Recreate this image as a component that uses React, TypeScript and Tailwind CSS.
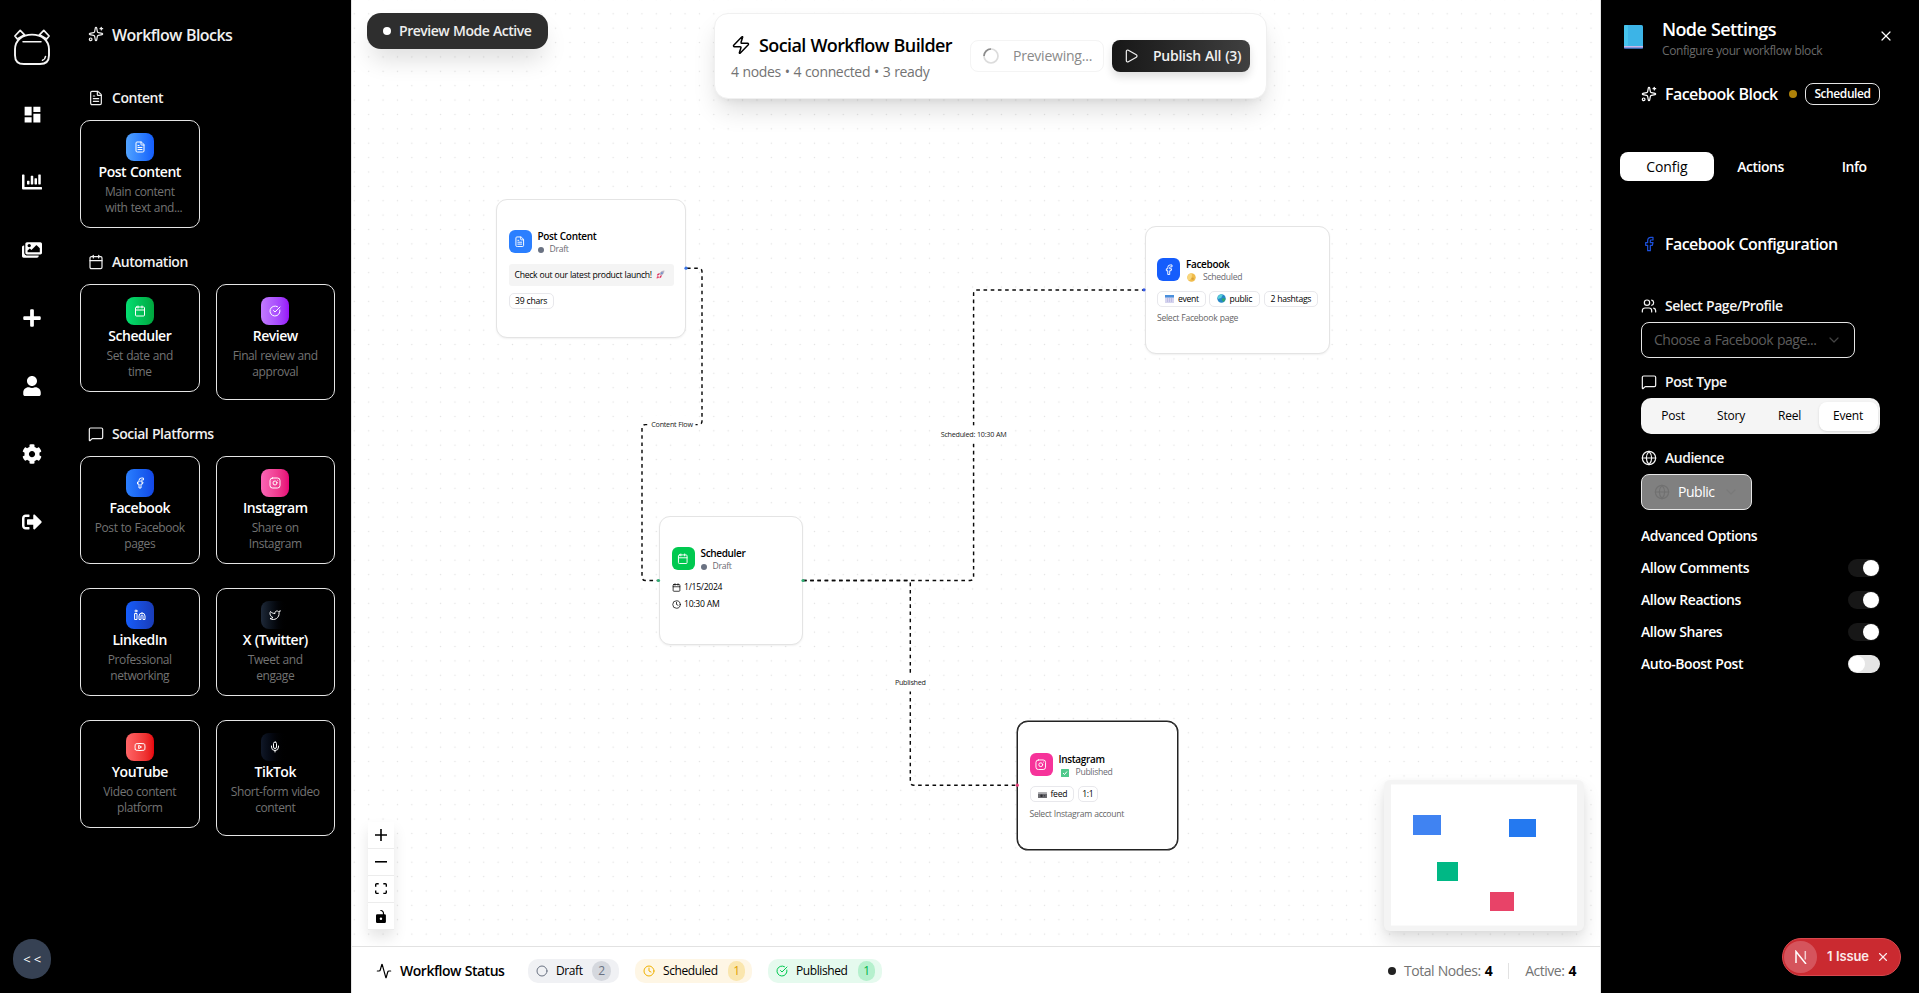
import React from "react";
import {
  Activity,
  Calendar,
  ChevronDown,
  Circle,
  CircleCheckBig,
  Clock,
  Facebook,
  FileText,
  Globe,
  Instagram,
  Linkedin,
  MessageSquare,
  Mic,
  Play,
  Sparkles,
  Twitter,
  Users,
  X,
  Youtube,
  Zap,
} from "lucide-react";
import { FaChartBar, FaCog, FaImages, FaPlus, FaSignOutAlt, FaUser } from "react-icons/fa";
import { MdDashboard } from "react-icons/md";

type IconType = React.ComponentType<{ className?: string; strokeWidth?: number }>;

/* ---------- Left rail ---------- */

function Logo() {
  return (
    <svg viewBox="0 0 38 38" className="h-[38px] w-[38px]" fill="none" stroke="#f5f5f5" strokeWidth="1.9" strokeLinejoin="round" strokeLinecap="round">
      <path d="M4.300 11 1.900 8 7.200 2.400 11.600 6.800 4.300 11" strokeWidth="1.700" />
      <path d="M33.700 11 36.100 8 30.800 2.400 26.400 6.800 33.700 11" strokeWidth="1.700" />
      <path d="M19 6.600c9.500 0 17 5.500 17 15v5.600c0 6-3 8.800-9 8.800H11c-6 0-9-2.800-9-8.800v-5.600c0-9.500 7.500-15 17-15Z" />
      <path d="M10 13.800h18" strokeWidth="1.500" />
      <path d="M32.500 28.500c-.3 2-1.200 3.200-3 3.800" strokeWidth="1.600" />
    </svg>
  );
}

function Rail() {
  const items: { icon: IconType; cls: string }[] = [
    { icon: MdDashboard, cls: "h-[21px] w-[21px]" },
    { icon: FaChartBar, cls: "h-5 w-5" },
    { icon: FaImages, cls: "h-5 w-5" },
    { icon: FaPlus, cls: "h-5 w-5" },
    { icon: FaUser, cls: "h-5 w-5" },
    { icon: FaCog, cls: "h-5 w-5" },
    { icon: FaSignOutAlt, cls: "h-5 w-5" },
  ];
  return (
    <nav className="flex w-16 shrink-0 flex-col items-center pt-[28px] pb-[14px] text-white">
      <Logo />
      <div className="mt-[38px] flex flex-col items-center gap-12">
        {items.map(({ icon: Icon, cls }, i) => (
          <span key={i} className="flex h-5 w-5 items-center justify-center">
            <Icon className={`${cls} shrink-0`} />
          </span>
        ))}
      </div>
      <button className="mt-auto flex h-10 w-[38px] items-center justify-center rounded-full bg-[#364153] pt-0.5 text-[13px] text-white">
        &lt; &lt;
      </button>
    </nav>
  );
}

/* ---------- Block palette ---------- */

interface Block {
  icon: IconType;
  title: string;
  lines: [string, string];
  tile: string;
  tall?: boolean;
  shift?: boolean;
}

const content: Block[] = [
  { icon: FileText, title: "Post Content", lines: ["Main content", "with text and..."], tile: "from-[#51a2ff] to-[#155dfc]", shift: true },
];
const automation: Block[] = [
  { icon: Calendar, title: "Scheduler", lines: ["Set date and", "time"], tile: "from-[#05df72] to-[#00a63e]" },
  { icon: CircleCheckBig, title: "Review", lines: ["Final review and", "approval"], tile: "from-[#c27aff] to-[#9810fa]", tall: true },
];
const social: Block[] = [
  { icon: Facebook, title: "Facebook", lines: ["Post to Facebook", "pages"], tile: "from-[#2b7fff] to-[#1447e6]" },
  { icon: Instagram, title: "Instagram", lines: ["Share on", "Instagram"], tile: "from-[#fb64b6] to-[#e60076]" },
  { icon: Linkedin, title: "LinkedIn", lines: ["Professional", "networking"], tile: "from-[#155dfc] to-[#193cb8]" },
  { icon: Twitter, title: "X (Twitter)", lines: ["Tweet and", "engage"], tile: "from-[#1e2939] to-black" },
  { icon: Youtube, title: "YouTube", lines: ["Video content", "platform"], tile: "from-[#ff6467] to-[#e7000b]" },
  { icon: Mic, title: "TikTok", lines: ["Short-form video", "content"], tile: "from-[#101828] to-black", tall: true },
];

function BlockCard({ icon: Icon, title, lines, tile, tall, shift }: Block) {
  return (
    <div className={`flex flex-col items-center rounded-[10px] border border-[#e5e5e5] pt-3 ${tall ? "h-[116px]" : "h-[108px]"}`}>
      <span className={`flex h-7 w-7 items-center justify-center rounded-lg bg-linear-to-r ${tile}`}>
        <Icon className="h-3 w-3 text-white" />
      </span>
      <h3 className="text-sm leading-[21px] font-[650] text-white">{title}</h3>
      <p className="mt-[2px] flex flex-col items-center text-xs leading-4 text-[#737373]">
        <span>{lines[0]}</span>
        <span className={shift ? "pl-2" : ""}>{lines[1]}</span>
      </p>
    </div>
  );
}

function Section({ icon: Icon, title, blocks, className }: { icon: IconType; title: string; blocks: Block[]; className: string }) {
  return (
    <section className={className}>
      <h2 className="flex h-4 items-center gap-2 pl-2 text-sm font-[650] text-[#f0f0f0]">
        <Icon className="h-4 w-4" strokeWidth={1.8} />
        {title}
      </h2>
      <div className="mt-[14px] grid grid-cols-2 items-start gap-x-4 gap-y-6">
        {blocks.map((b) => (
          <BlockCard key={b.title} {...b} />
        ))}
      </div>
    </section>
  );
}

function Palette() {
  return (
    <aside className="w-72 shrink-0 border-r border-[#e5e5e5] px-4 pt-[26px]">
      <h1 className="flex h-4 items-center gap-2 pl-2 text-base font-[650] text-[#f0f0f0]">
        <Sparkles className="h-4 w-4" strokeWidth={1.8} />
        <span className="pt-px">Workflow Blocks</span>
      </h1>
      <Section icon={FileText} title="Content" blocks={content} className="mt-12" />
      <Section icon={Calendar} title="Automation" blocks={automation} className="mt-[26px]" />
      <Section icon={MessageSquare} title="Social Platforms" blocks={social} className="mt-[26px]" />
    </aside>
  );
}

/* ---------- Canvas ---------- */

function Rocket() {
  return (
    <svg viewBox="0 0 16 16" className="h-[9px] w-[9px]">
      <path d="M15 1c-4 0-7 2-9.500 6l3.500 3.500C13 8 15 5 15 1Z" fill="#b9b3c4" />
      <path d="M6.500 5.500 2.500 7l-1 3 4-1zM10.500 9.500 9 13.500l-3 1 1-4z" fill="#e0305e" />
      <circle cx="10.500" cy="5.500" r="1.600" fill="#5d8ad0" />
      <path d="M1 15c0-3 1-4.500 2.500-4.500l2 2C5.500 14 4 15 1 15Z" fill="#e84a6f" />
    </svg>
  );
}

function Moon() {
  return (
    <svg viewBox="0 0 16 16" className="h-[9px] w-[9px]">
      <circle cx="8" cy="8" r="7.500" fill="#f0bc4c" />
      <path d="M8 .5a7.500 7.500 0 0 0-5 13A11 11 0 0 0 8 .5Z" fill="#f8d67c" />
      <circle cx="10" cy="10" r="2.200" fill="#d9a036" />
    </svg>
  );
}

function CalendarEmoji() {
  return (
    <svg viewBox="0 0 18 16" className="h-2 w-[9px]">
      <rect width="18" height="16" rx="1" fill="#d5d4ee" />
      <rect width="18" height="5" fill="#4a8fdc" />
      <path d="M4 7h2v2H4zM8 7h2v2H8zM12 7h2v2h-2zM4 11h2v2H4zM8 11h2v2H8zM12 11h2v2h-2z" fill="#a9a4dc" />
    </svg>
  );
}

function GlobeEmoji() {
  return (
    <svg viewBox="0 0 16 16" className="h-[9px] w-[9px]">
      <circle cx="8" cy="8" r="7.500" fill="#2687c8" />
      <path d="M3 3c3-3 7-2.500 7-1s-2 2-2 4-4 1-5 3c-1 1-2-2-1.500-3.500Z" fill="#58d0d8" />
      <path d="M9 8c3-1 6-1 6 1 0 3-3 5-4 5s-1-2-2-3-1-2.500 0-3Z" fill="#2fa56f" />
    </svg>
  );
}

function CheckEmoji() {
  return (
    <svg viewBox="0 0 16 16" className="h-2 w-2">
      <rect width="16" height="16" rx="1" fill="#4fc98b" />
      <path d="m4 8 3 3 5-6" fill="none" stroke="#fff" strokeWidth="2" />
    </svg>
  );
}

function CameraEmoji() {
  return (
    <svg viewBox="0 0 18 12" className="mt-0.5 h-[6px] w-[9px]">
      <rect y="1" width="18" height="11" rx="1" fill="#6b6b70" />
      <rect y="1" width="18" height="3" fill="#a9a9ad" />
      <circle cx="7" cy="7.500" r="2.500" fill="#2e2e33" />
      <circle cx="13" cy="7.500" r="1.500" fill="#3c3c42" />
    </svg>
  );
}

function NodeShell({ className, children }: { className: string; children: React.ReactNode }) {
  return (
    <div className={`absolute rounded-[11px] border bg-white px-[11.500px] text-[8.640px] leading-[12px] text-black ${className}`}>
      {children}
    </div>
  );
}

function NodeHead({ icon: Icon, tile, title, mark, status }: { icon: IconType; tile: string; title: string; mark: React.ReactNode; status: string }) {
  return (
    <div className="flex h-[26px] gap-x-[6px]">
      <span className={`flex h-[23px] w-[23px] shrink-0 items-center justify-center rounded-[6px] ${tile}`}>
        <Icon className="h-[11.500px] w-[11.500px] text-white" />
      </span>
      <div className="flex flex-col">
        <span className="text-[10px] leading-[13px] font-semibold">{title}</span>
        <span className="flex items-center leading-[13px] text-[#6a6a72]">
          {mark}
          {status}
        </span>
      </div>
    </div>
  );
}

function Chip({ className, children }: { className: string; children: React.ReactNode }) {
  return (
    <span className={`flex h-4 shrink-0 items-center rounded-[5px] border border-[#e8e8ec] font-medium whitespace-nowrap ${className}`}>
      {children}
    </span>
  );
}

const grayDot = <span className="mr-[6px] h-[6px] w-[6px] rounded-full bg-[#6a7282]" />;

function EdgeLabel({ x, y, text, width }: { x: number; y: number; text: string; width: number }) {
  return (
    <g>
      <rect x={x - width / 2 - 3} y={y - 9} width={width + 6} height={18} fill="#fff" />
      <text x={x} y={y + 2.4} textAnchor="middle" fontSize="7.2" fill="#222">
        {text}
      </text>
    </g>
  );
}

function Edges() {
  return (
    <svg viewBox="352 0 1248 946" className="absolute inset-0 h-full w-full">
      <defs>
        <pattern id="dots" x="361.5" y="6.6" width="14.38" height="14.38" patternUnits="userSpaceOnUse">
          <circle cx="7.190" cy="7.190" r="0.72" fill="#e2e2e2" />
        </pattern>
      </defs>
      <rect x="352" y="0" width="1248" height="946" fill="url(#dots)" />
      <g fill="none" stroke="#0a0a0a" strokeWidth="1.440" strokeDasharray="3.600 3.600">
        <path d="M687 268.200H698.500Q702 268.200 702 271.800V421Q702 424.600 698.500 424.600H645.500Q642 424.600 642 428.200V576.900Q642 580.500 645.500 580.500H658" />
        <path d="M803 580.500H970Q973.600 580.500 973.600 576.900V293.600Q973.600 290 977.200 290H1144" />
        <path d="M803 580.500H906.700Q910.300 580.500 910.300 584.100V781.600Q910.300 785.200 913.900 785.200H1017" />
      </g>
      <EdgeLabel x={672} y={424.6} width={41} text="Content Flow" />
      <EdgeLabel x={973.6} y={434.6} width={66} text="Scheduled: 10:30 AM" />
      <EdgeLabel x={910.3} y={682.5} width={31} text="Published" />
    </svg>
  );
}

function Handles() {
  return (
    <svg viewBox="352 0 1248 946" className="pointer-events-none absolute inset-0 h-full w-full">
      <circle cx="686" cy="268.200" r="1.600" fill="#3b76e8" />
      <circle cx="658.500" cy="580.500" r="1.600" fill="#2fae74" />
      <circle cx="803" cy="580.500" r="1.600" fill="#2fae74" />
      <circle cx="1144" cy="289.800" r="1.600" fill="#3458e8" />
      <circle cx="1017.300" cy="785.200" r="1.600" fill="#e8407a" />
    </svg>
  );
}

function Controls() {
  const cls = "flex h-[27px] w-[26px] items-center justify-center border-b border-[#ececec] bg-white";
  return (
    <div className="absolute top-[822px] left-4 flex flex-col shadow-[0_8px_14px_rgba(0,0,0,0.10)]">
      <span className={cls}>
        <svg viewBox="0 0 32 32" className="h-3 w-3">
          <path d="M32 18.133H18.133V32h-4.266V18.133H0v-4.266h13.867V0h4.266v13.867H32z" />
        </svg>
      </span>
      <span className={cls}>
        <svg viewBox="0 0 32 5" className="w-3">
          <path d="M0 0h32v4.200H0z" />
        </svg>
      </span>
      <span className={cls}>
        <svg viewBox="0 0 32 30" className="w-3">
          <path d="M3.692 4.630c0-.53.4-.938.939-.938h5.215V0H4.708C2.130 0 0 2.054 0 4.630v5.216h3.692V4.631zM27.354 0h-5.200v3.692h5.170c.53 0 .984.4.984.939v5.215H32V4.631A4.624 4.624 0 0027.354 0zm.954 24.830c0 .532-.4.940-.939.940h-5.215v3.768h5.215c2.577 0 4.631-2.130 4.631-4.707v-5.139h-3.692v5.139zm-23.677.940c-.531 0-.939-.4-.939-.940v-5.138H0v5.139c0 2.577 2.130 4.707 4.708 4.707h5.138V25.770H4.631z" />
        </svg>
      </span>
      <span className={cls}>
        <svg viewBox="0 0 25 32" className="h-[13px]">
          <path d="M21.333 10.667H19.810V7.619C19.810 3.429 16.380 0 12.190 0c-4.114 1.828-1.370 2.133.305 2.438 1.676.305 4.420 2.590 4.420 5.181v3.048H3.047A3.056 3.056 0 000 13.714v15.238A3.056 3.056 0 003.048 32h18.285a3.056 3.056 0 003.048-3.048V13.714a3.056 3.056 0 00-3.048-3.047zM12.190 24.533a3.056 3.056 0 01-3.047-3.047 3.056 3.056 0 013.047-3.048 3.056 3.056 0 013.048 3.048 3.056 3.056 0 01-3.048 3.047z" />
        </svg>
      </span>
    </div>
  );
}

function MiniMap() {
  return (
    <div className="absolute top-[780px] left-[1032px] h-[151px] w-[200px] rounded-md bg-[#f4f4f4] shadow-[0_10px_18px_rgba(0,0,0,0.12),0_2px_6px_rgba(0,0,0,0.04)]">
      <svg viewBox="0 0 200 151" className="h-full w-full">
        <rect x="7" y="4.500" width="186" height="141" fill="#fff" />
        <rect x="29" y="35" width="28" height="20" fill="#4083f2" />
        <rect x="125" y="39" width="27" height="18" fill="#2479f0" />
        <rect x="53" y="82" width="21" height="19" fill="#00b885" />
        <rect x="106" y="112" width="24" height="19" fill="#e84368" />
      </svg>
    </div>
  );
}

function HeaderCard() {
  return (
    <header className="absolute top-[13px] left-[362px] flex h-[86px] w-[553px] items-center rounded-[14px] border border-[#f0f0f0] bg-white pl-[16px] shadow-[0_14px_26px_-4px_rgba(0,0,0,0.14),0_4px_10px_-4px_rgba(0,0,0,0.08)]">
      <div className="flex w-[224px] flex-col">
        <h1 className="flex h-7 items-center gap-2 text-lg font-[570] text-black">
          <Zap className="h-5 w-5" strokeWidth={1.8} />
          Social Workflow Builder
        </h1>
        <p className="mt-[3px] text-sm leading-5 tracking-[-0.025em]! text-[#737373]">4 nodes • 4 connected • 3 ready</p>
      </div>
      <div className="ml-[15px] flex items-center gap-2">
        <button className="flex h-8 w-[134px] items-center rounded-lg border border-[#f4f4f4] pl-3 text-sm font-medium tracking-[-0.016em]! text-[#8a8a8a]">
          <svg viewBox="0 0 16 16" className="mr-[14px] h-4 w-4" fill="none" strokeWidth="1.700">
            <circle cx="8" cy="8" r="7" stroke="#dcdcdc" />
            <path d="M1 8a7 7 0 0 1 7-7" stroke="#8c8c8c" />
          </svg>
          Previewing...
        </button>
        <button className="flex h-8 w-[138px] items-center rounded-lg bg-linear-to-r from-[#171717] to-[#404040] pl-[11px] text-sm font-semibold tracking-[-0.018em]! text-[#f0f0f0] shadow-[0_5px_9px_rgba(0,0,0,0.13)]">
          <Play className="mr-[14px] h-4 w-4" strokeWidth={1.8} />
          Publish All (3)
        </button>
      </div>
    </header>
  );
}

function Canvas() {
  return (
    <div className="relative h-[946px] overflow-hidden bg-white">
      <Edges />
      <NodeShell className="top-[199px] left-[144px] h-[139px] w-[190px] border-[#e4e4e4] pt-[30px] shadow-[0_1px_2px_rgba(0,0,0,0.06)]">
        <NodeHead icon={FileText} tile="bg-[#2b7fff]" title="Post Content" mark={grayDot} status="Draft" />
        <div className="mt-[7.500px] flex h-[22.500px] w-[165px] items-center gap-[4px] rounded-[3px] bg-[#f4f4f4] pl-[6px] whitespace-nowrap">
          Check out our latest product launch!
          <Rocket />
        </div>
        <div className="mt-[6.500px] flex">
          <Chip className="w-[45px] justify-center">39 chars</Chip>
        </div>
      </NodeShell>
      <NodeShell className="top-[516px] left-[307px] h-[129px] w-[144px] border-[#e4e4e4] pt-[30px] shadow-[0_1px_2px_rgba(0,0,0,0.06)]">
        <NodeHead icon={Calendar} tile="bg-[#00c950]" title="Scheduler" mark={grayDot} status="Draft" />
        <div className="mt-[8px] flex items-center gap-[3.500px]">
          <Calendar className="h-[9px] w-[9px]" />
          1/15/2024
        </div>
        <div className="mt-[5px] flex items-center gap-[3.500px]">
          <Clock className="h-[9px] w-[9px]" />
          10:30 AM
        </div>
      </NodeShell>
      <NodeShell className="top-[226px] left-[792.500px] h-[128px] w-[185px] border-[#e4e4e4] pt-[31px] shadow-[0_1px_2px_rgba(0,0,0,0.06)]">
        <NodeHead icon={Facebook} tile="bg-[#155dfc]" title="Facebook" mark={<span className="mr-[7px] ml-px"><Moon /></span>} status="Scheduled" />
        <div className="mt-[6.500px] flex gap-[3.500px]">
          <Chip className="w-[48.500px] gap-[4px] pl-[7px]">
            <CalendarEmoji />
            event
          </Chip>
          <Chip className="w-[51px] gap-[4px] pl-[6.500px]">
            <GlobeEmoji />
            public
          </Chip>
          <Chip className="w-[54.500px] justify-center">2 hashtags</Chip>
        </div>
        <div className="mt-[5.500px] text-[#666]">Select Facebook page</div>
      </NodeShell>
      <NodeShell className="top-[721px] left-[665px] h-[129px] w-[161px] border-[#222] pt-[31px] shadow-[0_0_0_0.500px_#222]">
        <NodeHead icon={Instagram} tile="bg-[#f6339a]" title="Instagram" mark={<span className="mr-[7px] ml-[2px]"><CheckEmoji /></span>} status="Published" />
        <div className="mt-[7px] flex gap-[3.500px]">
          <Chip className="w-[44.500px] gap-[4px] pl-[7px]">
            <CameraEmoji />
            feed
          </Chip>
          <Chip className="w-[20.500px] justify-center">1:1</Chip>
        </div>
        <div className="mt-[6px] text-[#666]">Select Instagram account</div>
      </NodeShell>
      <Handles />
      <div className="absolute top-[13px] left-[15px] flex h-9 w-[181px] items-center gap-2 rounded-[14px] bg-[#2e2e2e] pl-4 text-sm font-[650] text-[#eee] shadow-[0_14px_24px_-4px_rgba(0,0,0,0.14)]">
        <span className="h-2 w-2 rounded-full bg-white" />
        Preview Mode Active
      </div>
      <HeaderCard />
      <Controls />
      <MiniMap />
    </div>
  );
}

function StatusBar() {
  return (
    <footer className="flex h-[47px] items-center border-t border-[#e2e2e2] bg-white pt-[2px] pr-6 pl-6 text-sm text-black">
      <Activity className="h-4 w-4" strokeWidth={1.8} />
      <span className="ml-2 w-[128px] font-semibold">Workflow Status</span>
      <div className="flex items-center gap-4 text-xs font-medium">
        <span className="flex h-6 w-[91px] items-center rounded-[10px] bg-[#f0f1f4] pl-2">
          <Circle className="mr-2 h-3 w-3 text-[#6a7282]" />
          Draft
          <span className="mr-2 ml-auto flex h-5 w-[19px] items-center justify-center rounded-full bg-[#d5d8de] text-[#6a7282]">2</span>
        </span>
        <span className="flex h-6 w-[117px] items-center rounded-[10px] bg-[#fef6e5] pl-2">
          <Clock className="mr-2 h-3 w-3 text-[#f0b100]" />
          Scheduled
          <span className="mr-[7px] ml-auto flex h-5 w-[17px] items-center justify-center rounded-full bg-[#fae6ae] text-[#dfa000]">1</span>
        </span>
        <span className="flex h-6 w-[114px] items-center rounded-[10px] bg-[#e5faee] pl-2">
          <CircleCheckBig className="mr-2 h-3 w-3 text-[#00c950]" />
          Published
          <span className="mr-[7px] ml-auto flex h-5 w-[17px] items-center justify-center rounded-full bg-[#b5f0cd] text-[#00b548]">1</span>
        </span>
      </div>
      <div className="ml-auto flex items-center">
        <span className="mr-2 h-2 w-2 rounded-full bg-[#222]" />
        <span className="text-[#737373]">Total Nodes:</span>
        <span className="ml-1 font-bold">4</span>
        <span className="mx-4 h-4 w-px bg-[#e2e2e2]" />
        <span className="text-[#737373]">Active:</span>
        <span className="ml-1 font-bold">4</span>
      </div>
    </footer>
  );
}

/* ---------- Settings panel ---------- */

function Label({ icon: Icon, text, className }: { icon: IconType; text: string; className: string }) {
  return (
    <div className={`flex h-4 items-center gap-2 text-sm font-[650] text-[#f5f5f5] ${className}`}>
      <Icon className="h-4 w-4" strokeWidth={1.8} />
      {text}
    </div>
  );
}

function Toggle({ label, on }: { label: string; on: boolean }) {
  return (
    <div className="flex h-[18px] items-center justify-between text-sm font-[650] text-white">
      {label}
      <span className={`flex h-[18px] w-8 items-center rounded-full px-px ${on ? "justify-end bg-[#171717]" : "bg-[#e5e5e5]"}`}>
        <span className="h-4 w-4 rounded-full bg-white" />
      </span>
    </div>
  );
}

function Settings() {
  const types = ["Post", "Story", "Reel", "Event"];
  const widths = ["w-[57px]", "w-[59px]", "w-[58px]", "w-[59px]"];
  return (
    <aside className="relative w-[319px] shrink-0 border-l border-[#e5e5e5] text-white">
      <div className="flex h-[72px] pt-[18px] pl-[23px]">
        <svg viewBox="0 0 19 24" className="mt-[7px] h-6 w-[19px]">
          <rect width="19" height="23.500" rx="1.500" fill="#3cb4e7" />
          <rect width="4" height="21" rx="1" fill="#46c4ee" />
          <rect y="21" width="19" height="2" fill="#c9b8e8" />
          <rect y="22.500" width="19" height="1" fill="#4a6fd0" />
        </svg>
        <div className="ml-[19px] w-[216px]">
          <h2 className="text-lg leading-[22px] font-semibold">Node Settings</h2>
          <p className="mt-[3px] text-xs leading-4 text-[#6a6a6a]">Configure your workflow block</p>
        </div>
        <X className="mt-[10px] h-4 w-4" strokeWidth={1.8} />
      </div>
      <div className="mt-[11px] flex h-[22px] items-center pl-10">
        <Sparkles className="h-4 w-4" strokeWidth={1.8} />
        <h3 className="ml-2 w-[124px] text-base font-semibold whitespace-nowrap">Facebook Block</h3>
        <span className="h-2 w-2 rounded-full bg-[#af8209]" />
        <span className="ml-2 flex h-[22px] w-[75px] items-center justify-center rounded-lg border border-[#e5e5e5] text-xs font-semibold">
          Scheduled
        </span>
      </div>
      <div className="mt-[47px] ml-[19px] grid w-[281px] grid-cols-3 text-sm font-semibold">
        <span className="flex h-[29px] items-center justify-center rounded-lg bg-white font-medium tracking-[-0.005em]! text-black">Config</span>
        <span className="flex h-[29px] items-center justify-center">Actions</span>
        <span className="flex h-[29px] items-center justify-center">Info</span>
      </div>
      <div className="pt-[54px] pr-[39px] pl-10">
        <h3 className="flex h-[18px] items-center gap-2 text-base font-semibold">
          <Facebook className="h-4 w-4 text-[#1c50dc]" strokeWidth={1.8} />
          Facebook Configuration
        </h3>
        <Label icon={Users} text="Select Page/Profile" className="mt-[45px]" />
        <div className="mt-2 flex h-9 w-[214px] items-center rounded-lg border border-[#e5e5e5] pr-3 pl-3 text-sm text-[#5c5c5c]">
          Choose a Facebook page...
          <ChevronDown className="ml-auto h-4 w-4 text-[#444]" strokeWidth={1.8} />
        </div>
        <Label icon={MessageSquare} text="Post Type" className="mt-4" />
        <div className="mt-2 flex h-9 w-[239px] items-center rounded-[10px] bg-[#f5f5f5] pl-[3.500px] text-xs font-medium text-black">
          {types.map((t, i) => (
            <span key={t} className={`flex h-[29px] items-center justify-center rounded-lg tracking-[-0.018em]! ${widths[i]} ${t === "Event" ? "bg-white shadow-sm" : ""}`}>
              {t}
            </span>
          ))}
        </div>
        <Label icon={Globe} text="Audience" className="mt-4" />
        <div className="mt-2 flex h-9 w-[111px] items-center rounded-lg border border-[#e5e5e5] bg-[#808080] pr-3 pl-3 text-sm">
          <Globe className="mr-2 h-4 w-4 text-[#717171]" strokeWidth={1.8} />
          Public
          <ChevronDown className="ml-auto h-4 w-4 text-[#797979]" />
        </div>
        <div className="mt-[17px] flex h-[18px] items-center text-sm font-[650]">Advanced Options</div>
        <div className="mt-[14px] flex flex-col gap-[14px]">
          <Toggle label="Allow Comments" on />
          <Toggle label="Allow Reactions" on />
          <Toggle label="Allow Shares" on />
          <Toggle label="Auto-Boost Post" on={false} />
        </div>
      </div>
      <div className="absolute top-[938px] left-[181px] flex h-[38px] w-[119px] items-center rounded-full border border-[#d8484e] bg-[#ca2a30] font-['Inter',sans-serif]">
        <span className="ml-px flex h-8 w-[33px] items-center justify-center rounded-full bg-[#d5545c]">
          <svg viewBox="0 0 14 14" className="h-[14px] w-[14px]" fill="none" stroke="#fff" strokeWidth="1.500">
            <path d="M2 13V1.500L12 14" />
            <path d="M11.300 1v8.500" strokeOpacity="0.7" />
          </svg>
        </span>
        <span className="ml-[10px] w-[42px] text-[13px] font-semibold tracking-[-0.010em]! whitespace-nowrap text-[#fbe9ea]">1 Issue</span>
        <X className="ml-[7px] h-[14px] w-[14px] text-[#fbe9ea]" strokeWidth={2} />
      </div>
    </aside>
  );
}

export default function App() {
  return (
    <div className="flex h-[993px] w-[1919px] overflow-hidden bg-black font-['Open_Sans','Noto_Sans',sans-serif] **:tracking-[-0.034em] **:[word-spacing:0.04em]">
      <Rail />
      <Palette />
      <main className="w-[1248px] shrink-0">
        <Canvas />
        <StatusBar />
      </main>
      <Settings />
    </div>
  );
}
